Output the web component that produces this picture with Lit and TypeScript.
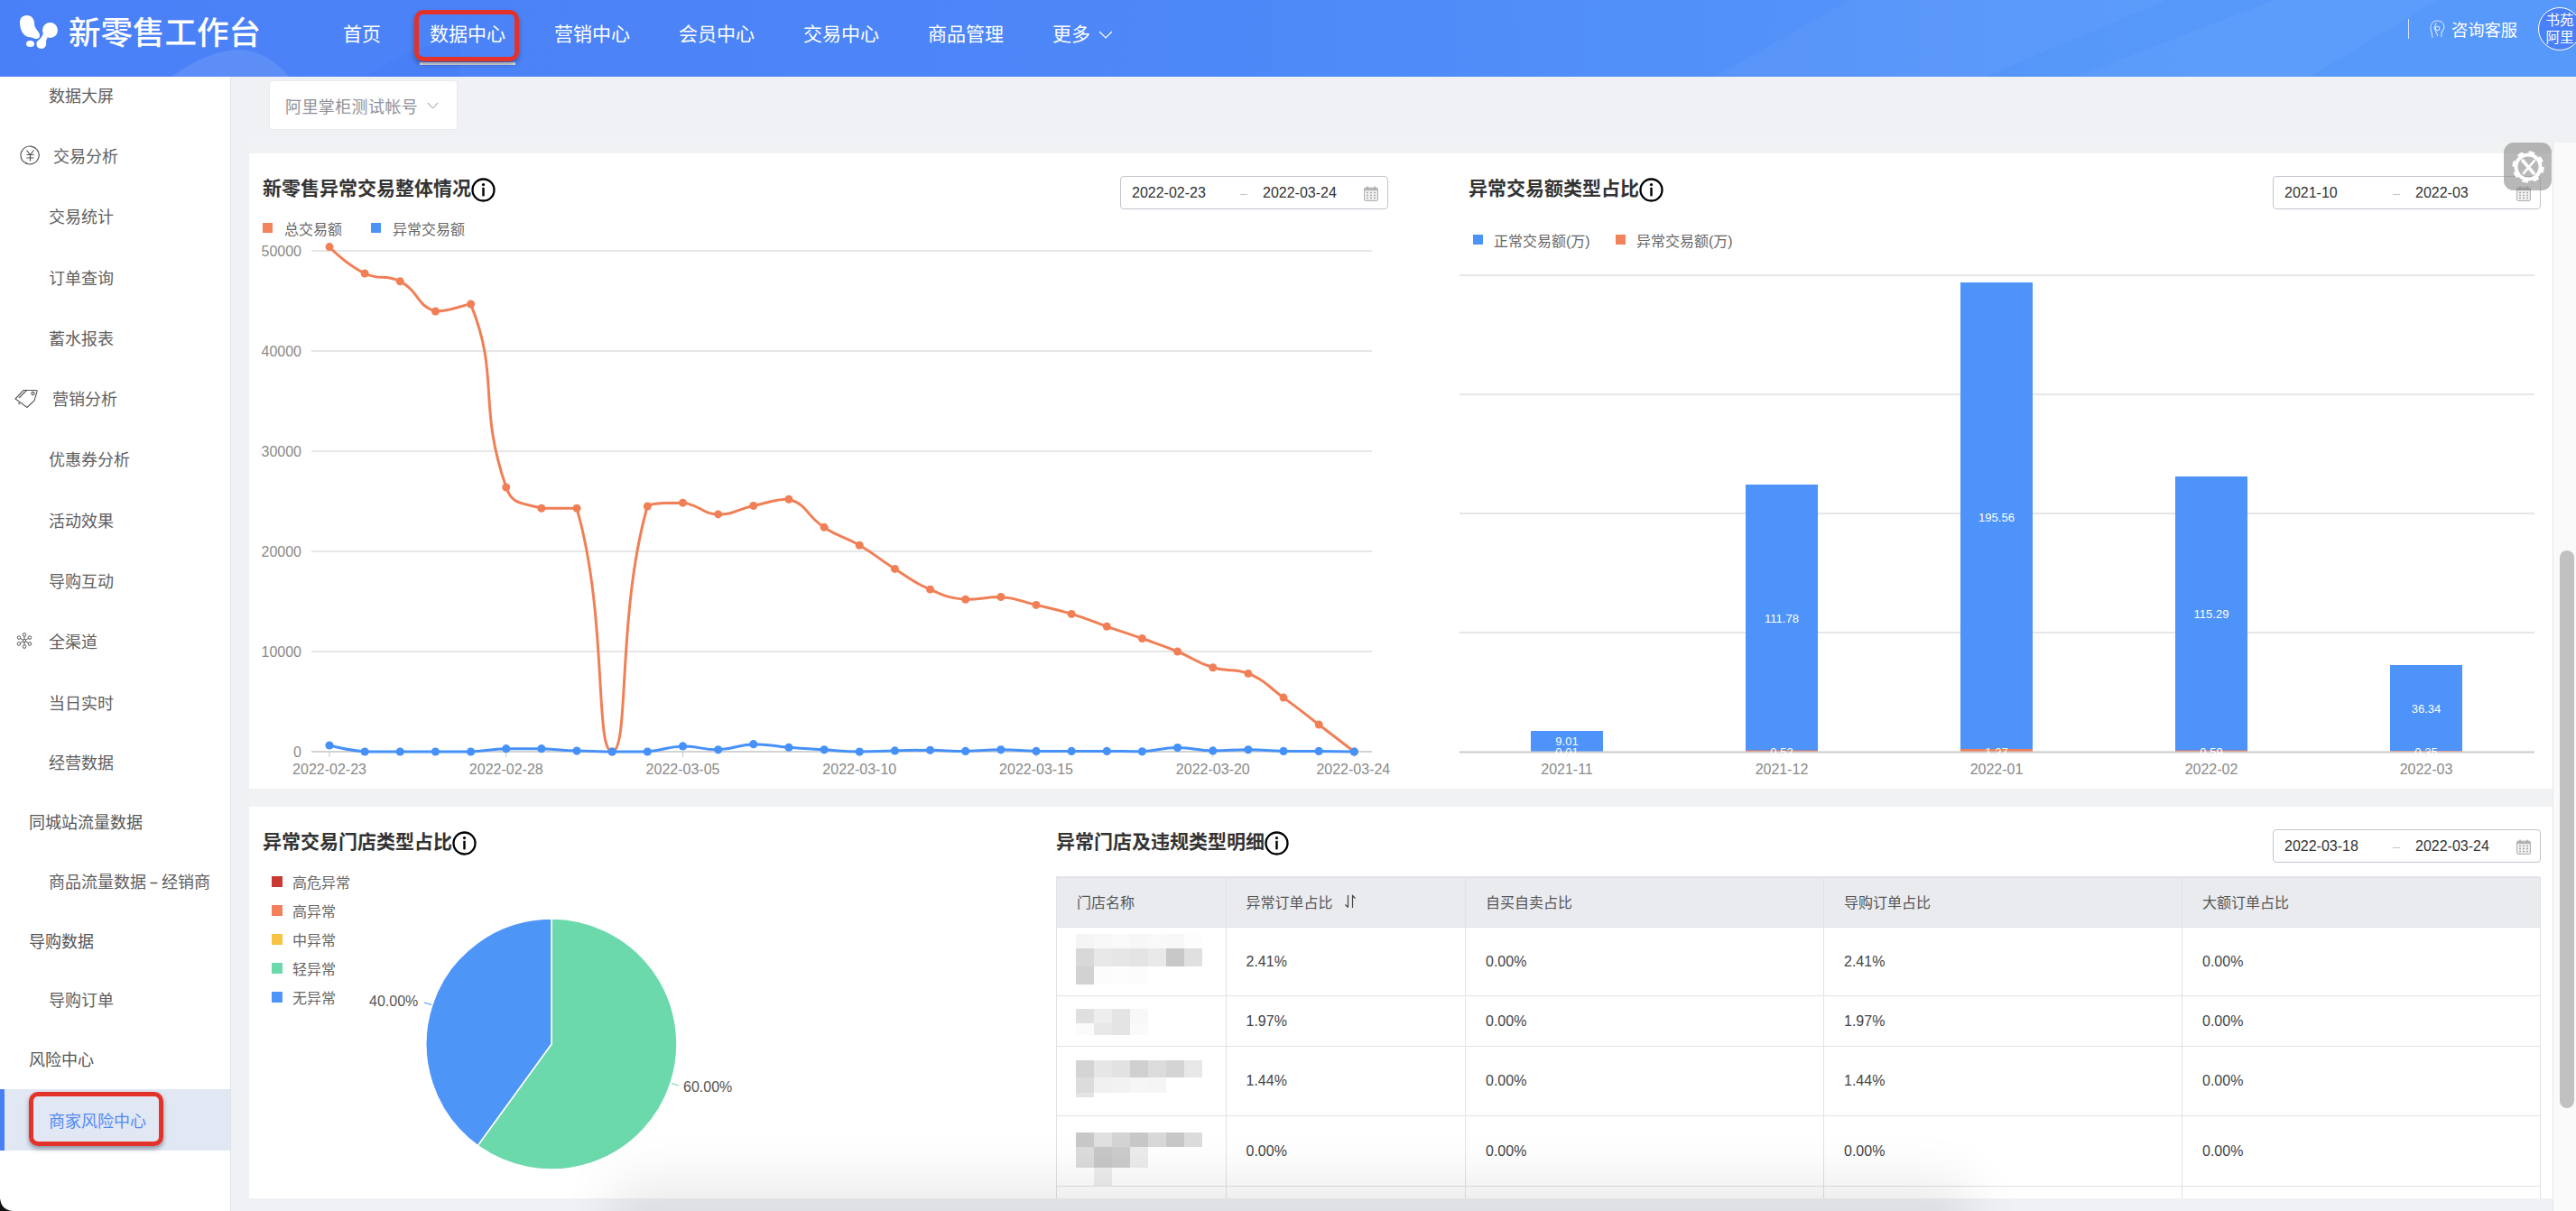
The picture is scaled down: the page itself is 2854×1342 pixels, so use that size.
import { LitElement, html, css, svg } from "lit";
import { customElement } from "lit/decorators.js";

type Pt = [number, number];

function smoothPath(p: Pt[], s = 0.5): string {
  const n = p.length;
  let d = `M${p[0][0]} ${p[0][1]}`;
  const cpOut: Pt[] = [];
  const cpIn: Pt[] = [];
  for (let i = 0; i < n; i++) {
    const [x, y] = p[i];
    if (i === 0 || i === n - 1) {
      cpOut[i] = [x, y];
      cpIn[i] = [x, y];
      continue;
    }
    const [px, py] = p[i - 1];
    const [nx, ny] = p[i + 1];
    const lp = Math.hypot(x - px, y - py);
    const ln = Math.hypot(nx - x, ny - y);
    const r = ln + lp === 0 ? 0.5 : ln / (ln + lp);
    const dx = nx - px;
    const dy = ny - py;
    let oy = y + dy * s * r;
    let iy = y - dy * s * (1 - r);
    oy = Math.min(Math.max(oy, Math.min(ny, y)), Math.max(ny, y));
    iy = Math.min(Math.max(iy, Math.min(py, y)), Math.max(py, y));
    cpOut[i] = [x + dx * s * r, oy];
    cpIn[i] = [x - dx * s * (1 - r), iy];
  }
  for (let i = 1; i < n; i++) {
    d += `C${cpOut[i - 1][0].toFixed(1)} ${cpOut[i - 1][1].toFixed(1)} ${cpIn[i][0].toFixed(1)} ${cpIn[i][1].toFixed(1)} ${p[i][0].toFixed(1)} ${p[i][1].toFixed(1)}`;
  }
  return d;
}

const TOTAL = [50400, 47750, 46950, 43960, 44680, 26400, 24300, 24300, 0, 24500, 24850, 23700, 24550, 25200, 22400, 20600, 18250, 16200, 15200, 15450, 14650, 13750, 12500, 11300, 10000, 8400, 7800, 5400, 2700, 0];
const ABN = [630, 0, 0, 0, 0, 300, 300, 80, 0, 0, 550, 200, 750, 430, 200, 0, 100, 150, 50, 200, 50, 50, 50, 20, 400, 100, 200, 50, 50, 0];
const px = (i: number) => 365 + i * 39.15;
const py = (v: number) => 833 - (v / 10000) * 111;

const SIDE: { t: string; k: string; active?: boolean; ic?: string }[] = [
  { t: "数据大屏", k: "sub" },
  { t: "交易分析", k: "ico yen", ic: "yen" },
  { t: "交易统计", k: "sub" },
  { t: "订单查询", k: "sub" },
  { t: "蓄水报表", k: "sub" },
  { t: "营销分析", k: "ico tag", ic: "tag" },
  { t: "优惠券分析", k: "sub" },
  { t: "活动效果", k: "sub" },
  { t: "导购互动", k: "sub" },
  { t: "全渠道", k: "ico flake", ic: "flake" },
  { t: "当日实时", k: "sub" },
  { t: "经营数据", k: "sub low" },
  { t: "同城站流量数据", k: "top low" },
  { t: "商品流量数据-经销商", k: "sub low" },
  { t: "导购数据", k: "top low" },
  { t: "导购订单", k: "sub low" },
  { t: "风险中心", k: "top low" },
  { t: "商家风险中心", k: "sub low", active: true },
];

const ROWS: { h: number; v: string[]; m: { h: number; c: string[] }[]; top: number }[] = [
  { h: 76, top: 7, v: ["2.41%", "0.00%", "2.41%", "0.00%"], m: [
    { h: 16, c: ["f5", "f8", "f9", "f7", "f9", "f8", "fd"] },
    { h: 20, c: ["d8", "e8", "e6", "e4", "e9", "c8", "e0"] },
    { h: 20, c: ["d2", "fc", "fd", "fc", "ff", "ff", "ff"] },
  ] },
  { h: 56, top: 14, v: ["1.97%", "0.00%", "1.97%", "0.00%"], m: [
    { h: 16, c: ["e0", "ee", "e4", "f8"] },
    { h: 13, c: ["fb", "e8", "e4", "fa"] },
  ] },
  { h: 77, top: 15, v: ["1.44%", "0.00%", "1.44%", "0.00%"], m: [
    { h: 19, c: ["d4", "e6", "e2", "d0", "dc", "d4", "e8"] },
    { h: 17, c: ["dc", "f0", "f2", "f6", "f5"] },
    { h: 5, c: ["e4"] },
  ] },
  { h: 77, top: 18, v: ["0.00%", "0.00%", "0.00%", "0.00%"], m: [
    { h: 16, c: ["c8", "e0", "d4", "c8", "d8", "c8", "dc"] },
    { h: 23, c: ["dc", "c8", "cc", "ec"] },
    { h: 20, c: ["ff", "ee"] },
  ] },
  { h: 80, top: 0, v: ["", "", "", ""], m: [] },
];

const info = html`<svg class="info" viewBox="0 0 27 27"><circle cx="13.5" cy="13.5" r="12" fill="none" stroke="#000" stroke-width="2.3"/><circle cx="13.5" cy="7.6" r="1.6"/><rect x="12.3" y="10.8" width="2.4" height="9.6"/></svg>`;

const cal = html`<svg class="cal" viewBox="0 0 16 17"><rect x=".6" y="2.2" width="14.8" height="14.2" rx="1" fill="#f2f2f2" stroke="#a8a8a8"/><rect x="1" y="2.6" width="14" height="2.6" fill="#b4b4b4"/><path d="M4 .5v3M12 .5v3" stroke="#a0a0a0" stroke-width="1.2"/><path d="M3 7.5h2M7 7.5h2M11 7.5h2M3 10.5h2M7 10.5h2M11 10.5h2M3 13.5h2M7 13.5h2M11 13.5h2" stroke="#a8a8a8" stroke-width="1.6"/></svg>`;

const picker = (a: string, b: string) => html`<div class="picker"><span class="d1">${a}</span><span class="dash"></span><span class="d2">${b}</span>${cal}</div>`;

const icons: Record<string, unknown> = {
  yen: html`<svg class="side-ic" width="23" height="22" viewBox="0 0 23 22" fill="none" stroke="#555" stroke-width="1.2"><path d="M19 5A10 10 0 1 0 19 17" /><path d="M6 19a10 10 0 0 0 2 1M19 5a10 10 0 0 1 2.4 6 10 10 0 0 1-2.4 6"/><path d="M7.5 5.5l4 5 4-5M11.5 10.5v7M7.5 10.5h8M7.5 14h8"/></svg>`,
  tag: html`<svg class="side-ic" width="26" height="22" viewBox="0 0 26 22" fill="none" stroke="#555" stroke-width="1.1"><path d="M1 12L10 2.5 H24 Q25.5 2.5 25 4L22 14 14 21.5 Z"/><path d="M4.5 16.5L6 18M5 11l9-9"/><circle cx="20.5" cy="6" r="1.6"/></svg>`,
  flake: html`<svg class="side-ic" width="18" height="18" viewBox="0 0 18 18" fill="none" stroke="#555" stroke-width="1"><circle cx="9" cy="2.4" r="1.8"/><circle cx="9" cy="15.6" r="1.8"/><circle cx="3" cy="5.6" r="1.8"/><circle cx="15" cy="5.6" r="1.8"/><circle cx="3" cy="12.4" r="1.8"/><circle cx="15" cy="12.4" r="1.8"/><circle cx="9" cy="9" r="1.6"/><path d="M9 4.2v3.2M9 10.6v3.2M4.6 6.5l3 1.7M13.4 6.5l-3 1.7M4.6 11.5l3-1.7M13.4 11.5l-3-1.7"/></svg>`,
};

@customElement("app-root")
export class AppRoot extends LitElement {
  static styles = css`
    :host {
      display: block;
      position: relative;
      width: 2854px;
      height: 1342px;
      overflow: hidden;
      background: #eff1f5;
      font-family: "Liberation Sans", "Noto Sans CJK SC", sans-serif;
      color: #333;
    }
    .hdr {
      position: relative;
      height: 85px;
      display: flex;
      align-items: flex-start;
      padding-left: 21px;
      background: linear-gradient(90deg, #4a80f7 0%, #4d87f8 45%, #5799fa 85%, #5799fa 100%);
      overflow: hidden;
      color: #fff;
    }
    .deco { position: absolute; left: 0; top: 0; }
    .logo { position: relative; margin-top: 17px; flex: none; }
    .brand { position: relative; margin-left: 12px; font-size: 35.5px; line-height: 74px; font-weight: 500; width: 213px; flex: none; white-space: nowrap; }
    .nav { position: relative; display: flex; gap: 54px; margin-left: 91px; font-size: 21px; line-height: 76px; }
    .nav-item { position: relative; white-space: nowrap; display: flex; align-items: center; height: 76px; }
    .nav-item .chev { margin-left: 9px; }
    .underline { position: absolute; left: -11px; right: -11px; top: 69px; height: 3px; background: #dfe3ea; }
    .mark-nav { position: absolute; left: -17px; top: 11px; width: 116px; height: 57px; }
    .mark { box-sizing: border-box; border: 5px solid #e3322a; border-radius: 10px; box-shadow: 0 3px 5px rgba(40, 40, 60, .45); }
    .hdr-right { position: relative; margin-left: auto; display: flex; align-items: center; height: 64px; margin-right: -6px; }
    .divider { width: 1px; height: 22px; background: #dbe7fd; margin-right: 23px; }
    .help { font-size: 18.3px; margin-left: 7px; white-space: nowrap; }
    .avatar {
      box-sizing: border-box; width: 48px; height: 48px; border-radius: 50%; margin-left: 23px; margin-top: 0;
      border: 1.5px solid #fff; background: #4a80f7; font-size: 15.5px; line-height: 19px; text-align: center;
      display: flex; align-items: center; justify-content: center; flex: none;
    }
    .body { display: flex; height: 1257px; }
    .side { box-sizing: border-box; width: 256px; flex: none; background: #fff; border-right: 1.5px solid #dfe1e6; overflow: hidden; font-size: 18px; color: #606060; }
    .side-list { margin-top: -14px; }
    .row { position: relative; display: flex; align-items: center; height: 67.3px; white-space: nowrap; box-sizing: border-box; }
    .row.low { height: 65.8px; }
    .row.sub { padding-left: 54px; }
    .row.top { padding-left: 32px; color: #555; }
    .row.yen { padding-left: 22px; gap: 14px; }
    .row.tag { padding-left: 16px; gap: 16px; }
    .row.flake { padding-left: 18px; gap: 18px; }
    .row.active { background: #e1e8f3; color: #5488f3; height: 67.6px; margin-top: 1px; }
    .hy { display: inline-block; width: 17px; text-align: center; transform: scaleX(1.8); }
    .bar { position: absolute; left: 0; top: 0; bottom: 0; width: 5px; background: #4a80f7; }
    .mark-side { position: absolute; left: 32px; top: 3px; width: 149px; height: 60px; }
    .main { flex: 1; min-width: 0; display: flex; flex-direction: column; }
    .acct-row { height: 73px; flex: none; padding: 4px 0 0 42px; box-sizing: border-box; }
    .acct {
      box-sizing: border-box; width: 209px; height: 55px; background: #fff; border: 1px solid #e9eaee; border-radius: 4px;
      display: flex; align-items: center; padding-left: 17px; gap: 10px; font-size: 18px; letter-spacing: .4px; color: #8f9198; white-space: nowrap;
    }
    .scroll { flex: 1; min-height: 0; display: flex; }
    .gutter { width: 20px; flex: none; }
    .content { width: 2552px; flex: none; background: #f1f2f3; padding-top: 12px; box-sizing: border-box; display: flex; flex-direction: column; gap: 20px; height: 1170px; }
    .track { width: 26px; flex: none; box-sizing: border-box; background: #fafafa; border-left: 1.5px solid #e6e7ea; padding: 452px 0 0 7px; }
    .thumb { width: 16px; height: 618px; border-radius: 8px; background: #c1c1c1; }
    .card { background: #fff; display: flex; overflow: hidden; flex: none; }
    .c1 { height: 704px; }
    .c2 { height: 434px; }
    .p-l1 { width: 1276px; flex: none; padding-top: 25px; box-sizing: border-box; }
    .p-r1 { width: 1216px; margin-left: 60px; flex: none; padding-top: 25px; box-sizing: border-box; }
    .p-l2 { width: 879px; flex: none; padding-top: 25px; box-sizing: border-box; }
    .p-r2 { width: 1673px; flex: none; padding-top: 25px; box-sizing: border-box; }
    .head { display: flex; justify-content: space-between; align-items: flex-start; height: 38px; padding: 0 14px 0 15px; }
    .p-r1 .head, .p-r2 .head { padding-right: 13px; }
    .title { display: flex; align-items: center; height: 27px; margin-top: 0; font-size: 21px; line-height: 23px; font-weight: 700; color: #333; white-space: nowrap; }
    .info { width: 27px; height: 27px; flex: none; margin-top: 3px; }
    .picker {
      position: relative; box-sizing: border-box; width: 297px; height: 37px; border: 1px solid #c3c5cf; border-radius: 4px;
      font-size: 16px; color: #333; display: flex; align-items: center; flex: none;
    }
    .d1 { margin-left: 12px; width: 120px; }
    .dash { width: 8px; height: 1px; background: #c3c5cf; margin-top: 3px; }
    .d2 { margin-left: 17px; }
    .cal { position: absolute; right: 10px; top: 10px; width: 16px; height: 17px; }
    .lg { display: flex; align-items: center; font-size: 16px; color: #666; white-space: nowrap; }
    .sq { width: 11px; height: 11px; flex: none; }
    .lg1 { margin: 14px 0 0 15px; height: 11px; }
    .lg1 .sq { margin-right: 13px; }
    .lg1 .t1 { width: 96px; }
    .lg2 { margin: 27px 0 0 20px; height: 11px; }
    .lg2 .sq { margin-right: 12px; }
    .lg2 .t1 { width: 135px; }
    .chart { display: block; }
    .chart text { font-family: "Liberation Sans", "Noto Sans CJK SC", sans-serif; font-size: 16px; fill: #8a8a8a; }
    .chart text.pct { fill: #555; }
    .chart text.val { fill: #fff; font-size: 13px; dominant-baseline: central; text-anchor: middle; }
    .pie-wrap { display: flex; margin-top: 9px; }
    .pie-lg { width: 124px; flex: none; padding: 0 0 0 25px; box-sizing: border-box; display: flex; flex-direction: column; gap: 10px; }
    .pie-lg .lg { height: 22px; }
    .pie-lg .sq { width: 12px; height: 12px; margin-right: 11px; }
    table { border-collapse: collapse; table-layout: fixed; width: 1644px; font-size: 16px; color: #444; }
    .tbl-wrap { margin-top: 14px; border-top: 1px solid #e6e6e6; margin-left: 15px; width: 1644px; }
    th, td { border: 1px solid #e0e2e6; padding: 0 0 0 22px; text-align: left; font-weight: 400; box-sizing: border-box; overflow: hidden; }
    th { background: #e9ebef; height: 55px; color: #555; white-space: nowrap; padding-bottom: 2px; }
    td.name { padding: 0 0 0 21px; vertical-align: top; }
    .th-in { display: flex; align-items: center; gap: 12px; }
    .mos { display: flex; flex-direction: column; }
    .mos-r { display: flex; }
    .mos-c { width: 20px; flex: none; }
    .gear { position: absolute; left: 2774px; top: 158px; width: 53px; height: 53px; border-radius: 11px; background: rgba(140, 140, 140, .62); display: flex; align-items: center; justify-content: center; }
    .dock { position: absolute; left: 720px; width: 1420px; top: 1352px; height: 30px; box-shadow: 0 0 60px 42px rgba(0, 0, 0, .085); pointer-events: none; }
    .corner { position: absolute; left: 0; top: 1328px; pointer-events: none; }
  `;

  private lineChart() {
    const total: Pt[] = TOTAL.map((v, i) => [px(i), py(v)]);
    const abn: Pt[] = ABN.map((v, i) => [px(i), py(v)]);
    const ticks = [0, 10000, 20000, 30000, 40000, 50000];
    const labels = [[0, "2022-02-23"], [5, "2022-02-28"], [10, "2022-03-05"], [15, "2022-03-10"], [20, "2022-03-15"], [25, "2022-03-20"], [29, "2022-03-24"]] as [number, string][];
    return html`<svg class="chart" width="1276" height="616" viewBox="276 258 1276 616">
      ${ticks.map((v) => svg`<line x1="345" x2="1520" y1=${py(v)} y2=${py(v)} stroke=${v === 0 ? "#c4c4c4" : "#dedede"} stroke-width="1.3"/><text x="334" y=${py(v) + 6} text-anchor="end">${v}</text>`)}
      ${labels.map(([i, t]) => svg`<line x1=${px(i)} x2=${px(i)} y1="833" y2="839" stroke="#c4c4c4"/><text x=${i === 29 ? px(i) - 1 : px(i)} y="858" text-anchor="middle">${t}</text>`)}
      <path d=${smoothPath(total)} fill="none" stroke="#f17f56" stroke-width="3"/>
      ${total.map((p) => svg`<circle cx=${p[0]} cy=${p[1]} r="4.5" fill="#f17f56"/>`)}
      <path d=${smoothPath(abn)} fill="none" stroke="#4691f9" stroke-width="3"/>
      ${abn.map((p) => svg`<circle cx=${p[0]} cy=${p[1]} r="4.6" fill="#4691f9"/>`)}
    </svg>`;
  }

  private barChart() {
    const bars = [
      { c: 1736, top: 810, o: 0, a: "9.01", b: "0.01", l: "2021-11" },
      { c: 1974, top: 537, o: 1.5, a: "111.78", b: "0.52", l: "2021-12" },
      { c: 2212, top: 313, o: 3, a: "195.56", b: "1.27", l: "2022-01" },
      { c: 2450, top: 528, o: 1.5, a: "115.29", b: "0.59", l: "2022-02" },
      { c: 2688, top: 737, o: 1, a: "36.34", b: "0.35", l: "2022-03" },
    ];
    return html`<svg class="chart" width="1216" height="603" viewBox="1612 271 1216 603">
      ${[305, 437, 569, 701].map((y) => svg`<line x1="1617" x2="2808" y1=${y} y2=${y} stroke="#dedede" stroke-width="1.3"/>`)}
      ${bars.map((b) => svg`
        <rect x=${b.c - 40} y=${b.top} width="80" height=${833 - b.top} fill="#4d93f9"/>
        ${b.o ? svg`<rect x=${b.c - 40} y=${833 - b.o} width="80" height=${b.o} fill="#f17f56"/>` : ""}
      `)}
      <line x1="1617" x2="2808" y1="833.5" y2="833.5" stroke="#cccccc" stroke-width="2"/>
      ${bars.map((b) => svg`
        <line x1=${b.c} x2=${b.c} y1="834" y2="839" stroke="#e4e4e4"/>
        <text class="val" x=${b.c} y=${(b.top + 833) / 2}>${b.a}</text>
        <text class="val" x=${b.c} y="833">${b.b}</text>
        <text x=${b.c} y="858" text-anchor="middle">${b.l}</text>
      `)}
    </svg>`;
  }

  private pie() {
    return html`<svg class="chart" width="755" height="362" viewBox="400 966 755 362">
      <path d="M611 1157L611 1018A139 139 0 1 1 529.3 1269.5Z" fill="#6cd9ac" stroke="#fff" stroke-width="1.5"/>
      <path d="M611 1157L529.3 1269.5A139 139 0 0 1 611 1018Z" fill="#4e95f8" stroke="#fff" stroke-width="1.5"/>
      <path d="M744 1200.5L752 1203" stroke="#6cd9ac" stroke-width="1.3"/>
      <path d="M470 1111L478 1113.5" stroke="#4e95f8" stroke-width="1.3"/>
      <text class="pct" x="757" y="1210">60.00%</text>
      <text class="pct" x="409" y="1115">40.00%</text>
    </svg>`;
  }

  private sideText(t: string) {
    const i = t.indexOf("-");
    if (i < 0) return t;
    return html`${t.slice(0, i)}<span class="hy">-</span>${t.slice(i + 1)}`;
  }

  render() {
    return html`
      <div class="hdr">
        <svg class="deco" width="2854" height="85" viewBox="0 0 2854 85">
          <path d="M190 85C225 60 255 52 275 56C295 60 310 72 320 85Z" fill="#fff" opacity=".11"/>
          <path d="M405 85C440 62 475 48 510 42V85Z" fill="#3f6cf0" opacity=".16"/>
          <path d="M2050 0L2400 0L2200 85L1900 85Z" fill="#fff" opacity=".035"/>
          <path d="M2300 85L2520 0H2700L2560 85Z" fill="#fff" opacity=".03"/>
        </svg>
        <svg class="logo" width="43" height="37" viewBox="0 0 43 37" fill="#fff">
          <path d="M1 8C1 2 5 0 9 0C14 0 17 4 17 9C17 13 19 15 22 19C24 22 23 26 20 26C17 26 14 24 10 24C4 22 1 15 1 8Z"/>
          <ellipse cx="34.5" cy="16.5" rx="8.5" ry="8.5"/>
          <path d="M27 20C26 23 23 27 20 29C18.5 33 20 37 25 37C29 37 31 33 30 29C31 26 31 25 32 24.5C30 24 28 22 27 20Z"/>
          <ellipse cx="12.5" cy="31.5" rx="4.5" ry="3.6"/>
        </svg>
        <div class="brand">新零售工作台</div>
        <nav class="nav">
          <div class="nav-item">首页</div>
          <div class="nav-item">数据中心<div class="underline"></div><div class="mark mark-nav"></div></div>
          <div class="nav-item">营销中心</div>
          <div class="nav-item">会员中心</div>
          <div class="nav-item">交易中心</div>
          <div class="nav-item">商品管理</div>
          <div class="nav-item">更多<svg class="chev" width="16" height="9" viewBox="0 0 16 9" fill="none" stroke="#fff" stroke-width="1.2"><path d="M1 1l7 7 7-7"/></svg></div>
        </nav>
        <div class="hdr-right">
          <div class="divider"></div>
          <svg width="17" height="21" viewBox="0 0 17 21" fill="none" stroke="#d5e4ff" stroke-width="1.1"><path d="M3 20C3 16 1 13 1 9C1 4 4 1 8.5 1C13 1 16 4 16 8.5L14.5 12L13 13.5V19"/><circle cx="8.5" cy="9.5" r="2.2"/><path d="M7 3.5L5 9L9 18"/></svg>
          <div class="help">咨询客服</div>
          <div class="avatar">书苑<br />阿里</div>
        </div>
      </div>
      <div class="body">
        <aside class="side">
          <div class="side-list">
            ${SIDE.map((r) => html`<div class="row ${r.k} ${r.active ? "active" : ""}">
              ${r.active ? html`<div class="bar"></div><div class="mark mark-side"></div>` : ""}
              ${r.ic ? icons[r.ic] : ""}<span>${this.sideText(r.t)}</span>
            </div>`)}
          </div>
        </aside>
        <main class="main">
          <div class="acct-row">
            <div class="acct">阿里掌柜测试帐号<svg width="13" height="8" viewBox="0 0 13 8" fill="none" stroke="#8f9197" stroke-width="1"><path d="M1 1l5.5 6L12 1"/></svg></div>
          </div>
          <div class="scroll">
            <div class="gutter"></div>
            <div class="content">
              <section class="card c1">
                <div class="p-l1">
                  <div class="head"><div class="title">新零售异常交易整体情况${info}</div>${picker("2022-02-23", "2022-03-24")}</div>
                  <div class="lg lg1"><span class="sq" style="background:#f2825a"></span><span class="t1">总交易额</span><span class="sq" style="background:#4b93f9"></span><span>异常交易额</span></div>
                  ${this.lineChart()}
                </div>
                <div class="p-r1">
                  <div class="head"><div class="title">异常交易额类型占比${info}</div>${picker("2021-10", "2022-03")}</div>
                  <div class="lg lg2"><span class="sq" style="background:#4b93f9"></span><span class="t1">正常交易额(万)</span><span class="sq" style="background:#f2825a"></span><span>异常交易额(万)</span></div>
                  ${this.barChart()}
                </div>
              </section>
              <section class="card c2">
                <div class="p-l2">
                  <div class="head"><div class="title">异常交易门店类型占比${info}</div></div>
                  <div class="pie-wrap">
                    <div class="pie-lg">
                      ${[["高危异常", "#c83a32"], ["高异常", "#f3805a"], ["中异常", "#f7c343"], ["轻异常", "#6cd9ac"], ["无异常", "#4e95f8"]].map(([t, c]) => html`<div class="lg"><span class="sq" style="background:${c}"></span>${t}</div>`)}
                    </div>
                    ${this.pie()}
                  </div>
                </div>
                <div class="p-r2">
                  <div class="head"><div class="title">异常门店及违规类型明细${info}</div>${picker("2022-03-18", "2022-03-24")}</div>
                  <div class="tbl-wrap">
                    <table>
                      <colgroup><col style="width:187.5px" /><col style="width:265.5px" /><col style="width:397px" /><col style="width:397px" /><col style="width:397px" /></colgroup>
                      <thead><tr>
                        <th>门店名称</th>
                        <th><div class="th-in">异常订单占比<svg width="14" height="16" viewBox="0 0 14 16" fill="none" stroke="#444" stroke-width="1.2"><path d="M4.5 1v13.5M1.5 11.5l3 3M9.5 15V1.5l3 3"/></svg></div></th>
                        <th>自买自卖占比</th>
                        <th>导购订单占比</th>
                        <th>大额订单占比</th>
                      </tr></thead>
                      <tbody>
                        ${ROWS.map((r) => html`<tr style="height:${r.h}px">
                          <td class="name"><div class="mos" style="padding-top:${r.top}px">${r.m.map((m) => html`<div class="mos-r" style="height:${m.h}px">${m.c.map((c) => html`<div class="mos-c" style="background:#${c}${c}${c}"></div>`)}</div>`)}</div></td>
                          ${r.v.map((v) => html`<td>${v}</td>`)}
                        </tr>`)}
                      </tbody>
                    </table>
                  </div>
                </div>
              </section>
            </div>
            <div class="track"><div class="thumb"></div></div>
          </div>
        </main>
      </div>
      <div class="gear">
        <svg width="36" height="36" viewBox="0 0 36 36">
          <circle cx="18" cy="18" r="13.5" fill="none" stroke="#fff" stroke-width="4"/>
          <circle cx="18" cy="18" r="15.5" fill="none" stroke="#fff" stroke-width="4.5" stroke-dasharray="6.2 6"/>
          <path d="M12 11L24 25" stroke="#fff" stroke-width="3.6" stroke-linecap="round"/>
          <path d="M25 11L13 25" stroke="#fff" stroke-width="2.6" stroke-linecap="round"/>
        </svg>
      </div>
      <div class="dock"></div>
      <svg class="corner" width="14" height="14" viewBox="0 0 14 14"><path d="M0 0C1 8 5 13 14 14H0Z" fill="#111"/></svg>
    `;
  }
}
